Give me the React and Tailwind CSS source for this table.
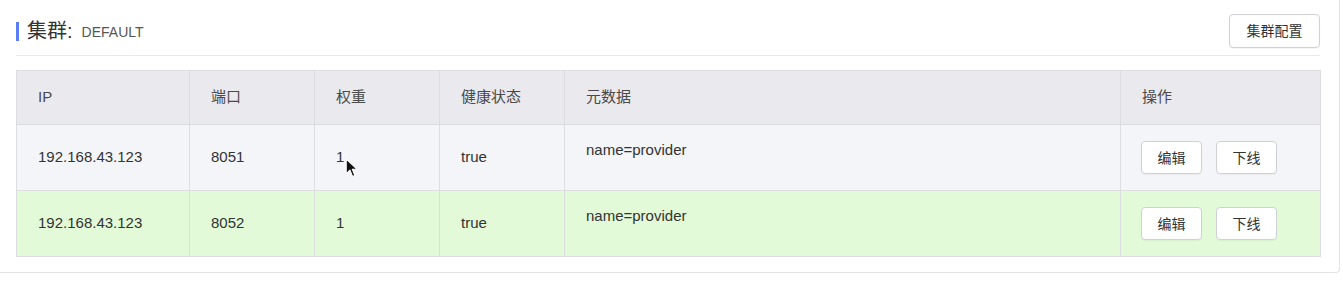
import React from "react";

const rows = [
  { ip: "192.168.43.123", port: "8051", weight: "1", healthy: "true", meta: "name=provider", bg: "bg-[#f4f5f8]" },
  { ip: "192.168.43.123", port: "8052", weight: "1", healthy: "true", meta: "name=provider", bg: "bg-[#e2fad7]" },
];

const cols = [
  { label: "IP", w: "w-[173px]" },
  { label: "端口", w: "w-[125px]" },
  { label: "权重", w: "w-[125px]" },
  { label: "健康状态", w: "w-[125px]" },
  { label: "元数据", w: "w-[556px]" },
  { label: "操作", w: "w-[200px]" },
];

function Btn({ children, className = "" }) {
  return (
    <button
      className={
        "bg-white border border-[#cfd1d6] rounded-[4px] text-[#333] text-[14px] leading-none shadow-[0_1px_1px_rgba(0,0,0,0.04)] " +
        className
      }
    >
      {children}
    </button>
  );
}

function Pointer() {
  return (
    <svg width="14" height="21" viewBox="0 0 13 20" className="absolute left-[9px] top-[12px]">
      <path d="M1 1 L1 15 L4.5 11.5 L7 17.5 L9.2 16.6 L6.8 10.8 L11.5 10.8 Z" fill="#111" stroke="#fff" strokeWidth="1" strokeLinejoin="round" />
    </svg>
  );
}

export default function App() {
  return (
    <div
      className="w-[1343px] h-[284px] bg-white"
      style={{ fontFamily: '"Liberation Sans", "Noto Sans CJK SC", Arial, sans-serif' }}
    >
      <div className="w-[1340px] h-[273px] border-r border-b border-[#e3e4e8] rounded-br-[4px] pl-[16px] pr-[19px] pt-[14px]">
        {/* section header */}
        <div className="flex items-center justify-between h-[34px]">
          <div className="flex items-center">
            <span className="w-[3px] h-[19px] bg-[#5a7ff5] mr-[8px]" />
            <span className="text-[20px] text-[#333] leading-none">集群:</span>
            <span className="text-[14px] text-[#555] ml-[9px] leading-none mt-[2px]">DEFAULT</span>
          </div>
          <Btn className="w-[91px] h-[34px] text-[14px]">集群配置</Btn>
        </div>
        <div className="h-px bg-[#e8e9ec] mt-[7px] mb-[14px]" />

        {/* instance table */}
        <table className="w-[1304px] border-collapse table-fixed text-[15px]">
          <thead>
            <tr className="h-[54px] bg-[#e9e9ee]">
              {cols.map((c) => (
                <th
                  key={c.label}
                  className={c.w + " border border-[#dcdde1] text-left font-normal text-[#4a4a4a] pl-[21px] align-middle"}
                >
                  {c.label}
                </th>
              ))}
            </tr>
          </thead>
          <tbody>
            {rows.map((r, i) => (
              <tr key={r.port} className={"h-[66px] " + r.bg}>
                <td className="border border-[#dcdde1] pl-[21px] text-[#333] align-middle">{r.ip}</td>
                <td className="border border-[#dcdde1] pl-[21px] text-[#333] align-middle">{r.port}</td>
                <td className="border border-[#dcdde1] pl-[21px] text-[#333] align-middle">
                  <div className="relative">
                    {r.weight}
                    {i === 0 && <Pointer />}
                  </div>
                </td>
                <td className="border border-[#dcdde1] pl-[21px] text-[#333] align-middle">{r.healthy}</td>
                <td className="border border-[#dcdde1] pl-[21px] pt-[16px] text-[#333] align-top leading-[18px]">{r.meta}</td>
                <td className="border border-[#dcdde1] pl-[20px] align-middle">
                  <div className="flex gap-[14px]">
                    <Btn className="w-[61px] h-[33px]">编辑</Btn>
                    <Btn className="w-[61px] h-[33px]">下线</Btn>
                  </div>
                </td>
              </tr>
            ))}
          </tbody>
        </table>
      </div>
    </div>
  );
}
